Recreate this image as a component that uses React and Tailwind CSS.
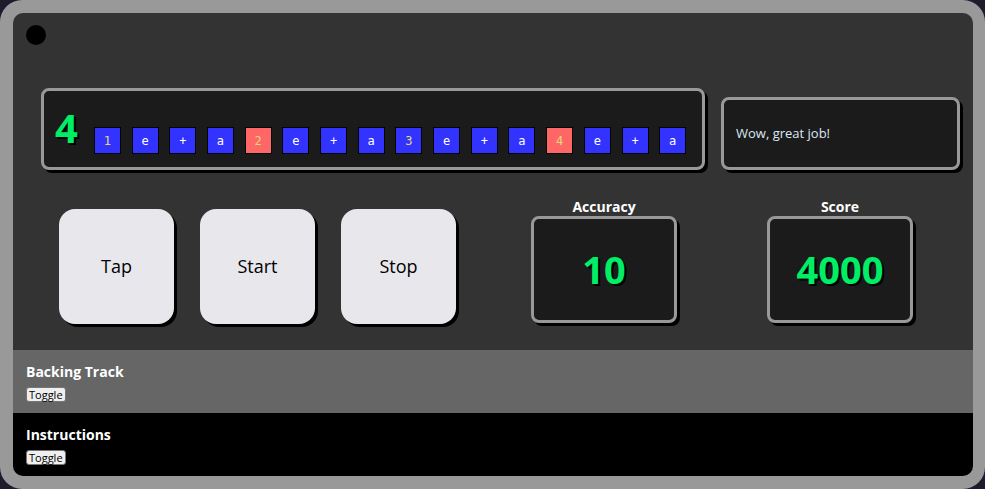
import React from 'react';

const beats = ['1', 'e', '+', 'a', '2', 'e', '+', 'a', '3', 'e', '+', 'a', '4', 'e', '+', 'a'];
const active = [4, 12];

const font = { fontFamily: '"Open Sans", "Noto Sans", sans-serif' };

const Beat = ({ label, hot }) => {
  const isNum = /\d/.test(label);
  return (
    <div
      className={`w-[27px] h-[27px] border border-black flex items-center justify-center text-[12px] ${
        hot ? 'bg-[#ff6666]' : 'bg-[#3333ff]'
      } ${isNum ? 'text-[#e6d87a]' : 'text-white'}`}
      style={{ fontFamily: '"DejaVu Sans Mono", monospace' }}
    >
      {label}
    </div>
  );
};

const PadButton = ({ label }) => (
  <button className="w-[115px] h-[115px] rounded-[16px] bg-[#e8e7ec] text-black text-[18px] shadow-[3px_3px_0_#000]">
    {label}
  </button>
);

const Stat = ({ label, value }) => (
  <div className="flex flex-col items-center">
    <div className="text-white font-bold text-[14px] leading-[18px]">{label}</div>
    <div className="w-[146px] h-[107px] rounded-[8px] border-[3px] border-[#999] bg-[#1b1b1b] shadow-[3px_3px_0_#000] flex items-center justify-center">
      <span className="text-[#00ee66] font-bold text-[38px] [text-shadow:2px_2px_0_#000]">{value}</span>
    </div>
  </div>
);

const Section = ({ title, bg }) => (
  <div className={`${bg} h-[63px] px-[13px] pt-[13px]`}>
    <div className="text-white font-bold text-[14px] leading-[18px]">{title}</div>
    <button className="mt-[2px] bg-[#efefef] border border-[#767676] rounded-[3px] text-black text-[11px] leading-[13px] px-[2px] py-[0px]">
      Toggle
    </button>
  </div>
);

export default function App() {
  return (
    <div className="w-full h-[489px] bg-[#1c1c2c]" style={font}>
      <div className="h-full rounded-[22px] bg-[#999] p-[13px] pb-[13px] pr-[12px]">
        <div className="h-full rounded-[10px] overflow-hidden flex flex-col">
          <div className="bg-[#333] h-[337px] px-[13px] pt-[12px]">
            <div className="w-[20px] h-[20px] rounded-full bg-black" />
            <div className="flex items-end gap-[16px] mt-[43px] pl-[15px]">
              <div className="w-[664px] h-[82px] rounded-[8px] border-[3px] border-[#999] bg-[#1b1b1b] shadow-[3px_3px_0_#000] flex items-end pb-[13px] pl-[11px]">
                <span className="text-[#00ee66] font-bold text-[40px] leading-[40px] mb-[6px] mr-[16px] [text-shadow:2px_2px_0_#000]">4</span>
                <div className="flex gap-[10.7px]">
                  {beats.map((b, i) => (
                    <Beat key={i} label={b} hot={active.includes(i)} />
                  ))}
                </div>
              </div>
              <div className="w-[239px] h-[73px] rounded-[8px] border-[3px] border-[#999] bg-[#1b1b1b] shadow-[3px_3px_0_#000] flex items-center pl-[12px]">
                <span className="text-[#dde6f5] text-[13px]">Wow, great job!</span>
              </div>
            </div>
            <div className="flex items-end mt-[28px] pl-[33px]">
              <div className="flex gap-[26px]">
                <PadButton label="Tap" />
                <PadButton label="Start" />
                <PadButton label="Stop" />
              </div>
              <div className="ml-[75px] mb-[1px] flex gap-[90px]">
                <Stat label="Accuracy" value="10" />
                <Stat label="Score" value="4000" />
              </div>
            </div>
          </div>
          <Section title="Backing Track" bg="bg-[#666]" />
          <Section title="Instructions" bg="bg-black flex-1" />
        </div>
      </div>
    </div>
  );
}
